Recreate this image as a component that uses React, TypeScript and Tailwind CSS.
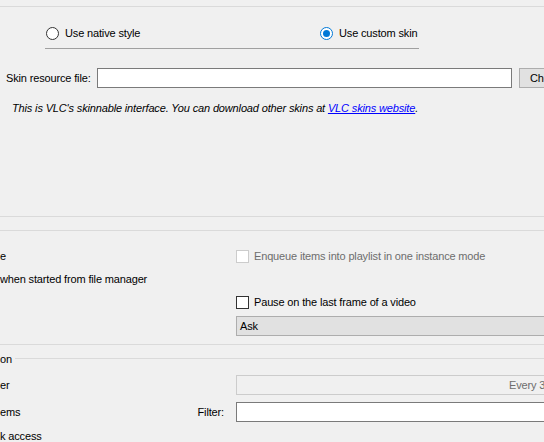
import type { ReactNode } from "react";

function Radio({ checked, label }: { checked?: boolean; label: string }) {
  return (
    <label className="flex items-center gap-[6px]">
      {checked ? (
        <span className="flex h-[13px] w-[13px] items-center justify-center rounded-full border border-[#0078d7] bg-white">
          <span className="h-[7px] w-[7px] rounded-full bg-[#0078d7]" />
        </span>
      ) : (
        <span className="h-[13px] w-[13px] rounded-full border border-[#333333] bg-white" />
      )}
      <span>{label}</span>
    </label>
  );
}

function Check({ disabled, label }: { disabled?: boolean; label: string }) {
  return (
    <label className={`flex items-center gap-[5px] ${disabled ? "text-[#6d6d6d]" : ""}`}>
      <span
        className={`h-[13px] w-[13px] border bg-white ${disabled ? "border-[#cccccc]" : "border-[#333333]"}`}
      />
      <span>{label}</span>
    </label>
  );
}

function Row({ top, h, left, children }: { top: string; h: string; left?: ReactNode; children?: ReactNode }) {
  return (
    <div className={`flex ${top} ${h}`}>
      <div className="flex w-[236px] shrink-0 items-center overflow-hidden whitespace-nowrap">{left}</div>
      <div className="flex min-w-0 flex-1 items-center">{children}</div>
    </div>
  );
}

export default function App() {
  return (
    <div className="h-[442px] w-[544px] overflow-hidden bg-[#f0f0f0] font-['Liberation_Sans',sans-serif] text-[11px] leading-[16px] tracking-[-0.15px] text-black">
      <div className="h-[7px] border-b border-[#dadada]" />

      {/* skin style radios */}
      <div className="ml-[46px] mt-[18px] flex h-[16px] items-center">
        <div className="w-[274px]">
          <Radio label="Use native style" />
        </div>
        <Radio checked label="Use custom skin" />
      </div>
      <div className="ml-[45px] mt-[7px] h-px w-[374px] bg-[#a0a0a0]" />

      <div className="mt-[19px] flex h-[20px] items-center">
        <span className="ml-[6px] w-[91px] shrink-0 whitespace-nowrap">Skin resource file:</span>
        <div className="h-[20px] w-[415px] shrink-0 border border-[#7a7a7a] bg-white" />
        <button
          type="button"
          className="ml-[7px] h-[20px] w-[75px] shrink-0 border border-[#adadad] bg-[#e1e1e1] pl-[10px] text-left"
        >
          Choose...
        </button>
      </div>

      <p className="ml-[12px] mt-[12px] whitespace-nowrap italic">
        This is VLC's skinnable interface. You can download other skins at{" "}
        <a href="#" className="text-[#0000ff] underline">
          VLC skins website
        </a>
        .
      </p>

      <div className="mt-[100px] h-px bg-[#dadada]" />
      <div className="mt-[13px] h-px bg-[#dadada]" />

      <Row top="mt-[15px]" h="h-[20px]" left={<span>e</span>}>
        <Check disabled label="Enqueue items into playlist in one instance mode" />
      </Row>
      <Row top="mt-[3px]" h="h-[20px]" left={<span>when started from file manager</span>} />
      <Row top="mt-[3px]" h="h-[20px]">
        <Check label="Pause on the last frame of a video" />
      </Row>
      <Row top="mt-[4px]" h="h-[20px]">
        <div className="flex h-[20px] w-[320px] shrink-0 items-center border border-[#adadad] bg-[#e1e1e1] pl-[3px]">
          Ask
        </div>
      </Row>

      <div className="mt-[8px] h-px bg-[#dadada]" />
      <div className="mt-[6px] flex h-[16px] items-center">
        <span>on</span>
        <div className="ml-[3px] h-px flex-1 -translate-y-[1px] bg-[#dadada]" />
      </div>

      <Row top="mt-[8px]" h="h-[20px]" left={<span>er</span>}>
        <div className="flex h-[20px] w-[320px] shrink-0 items-center border border-[#cccccc] bg-[#f0f0f0] pl-[272px] text-[#6d6d6d] whitespace-nowrap">
          Every 30 seconds
        </div>
      </Row>
      <Row
        top="mt-[7px]"
        h="h-[20px]"
        left={
          <div className="flex w-full items-center justify-between pr-[12px]">
            <span>ems</span>
            <span>Filter:</span>
          </div>
        }
      >
        <div className="h-[20px] w-[320px] shrink-0 border border-[#7a7a7a] bg-white" />
      </Row>
      <div className="mt-[6px] flex h-[16px] items-center whitespace-nowrap">k access</div>
    </div>
  );
}
